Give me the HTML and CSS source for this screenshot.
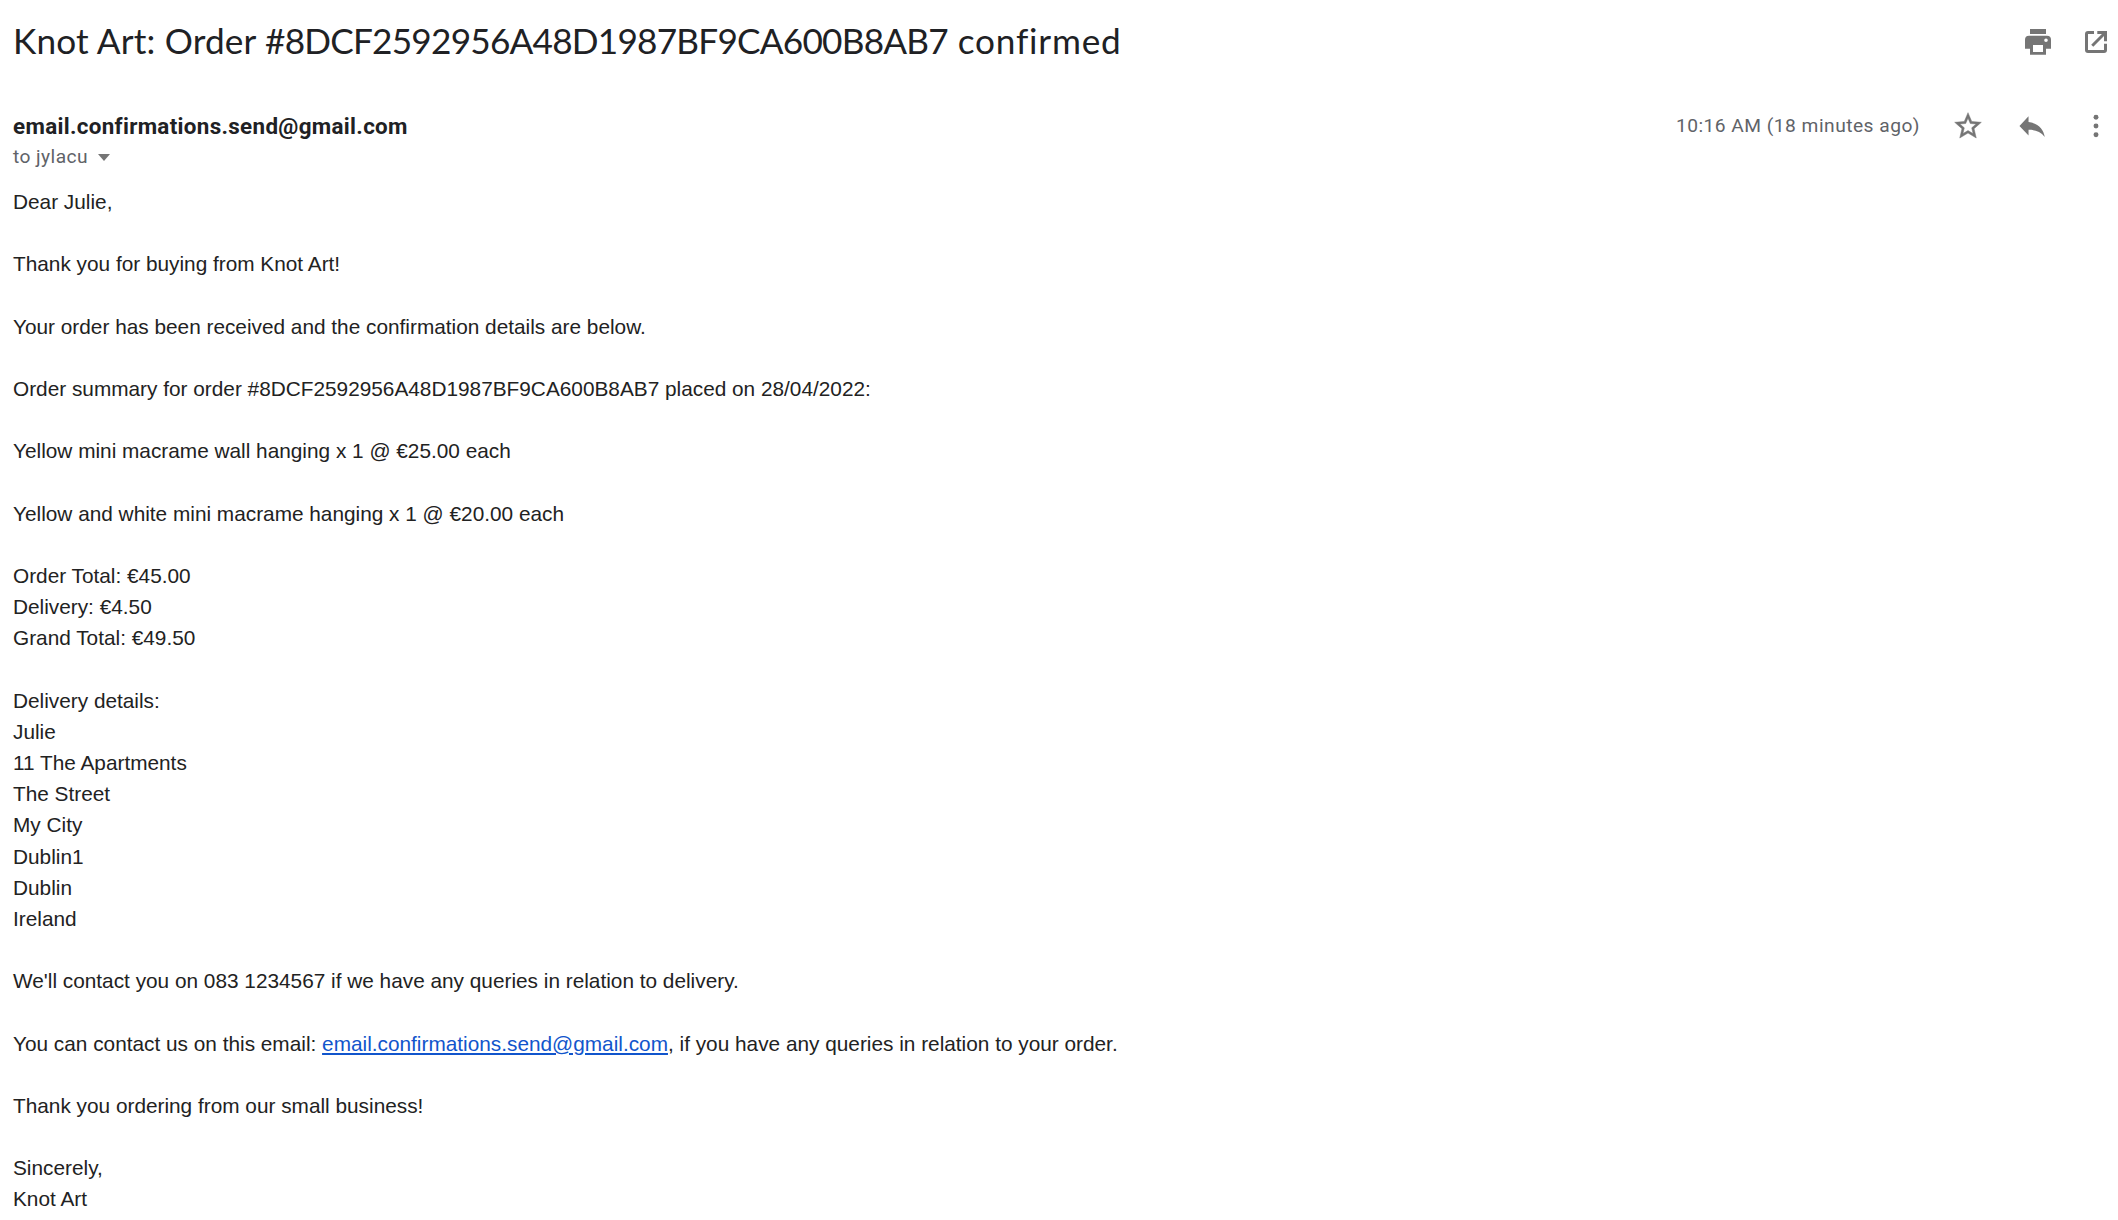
FILE: index.html
```html
<!DOCTYPE html>
<html lang="en">
<head>
<meta charset="utf-8">
<title>Knot Art order confirmation</title>
<link rel="stylesheet" href="styles.css">
</head>
<body>
<main class="message">
  <header class="subject-bar">
    <h1 class="subject">Knot Art: Order <span class="order-id">#8DCF2592956A48D1987BF9CA600B8AB7</span><span class="status"> confirmed</span></h1>
    <div class="subject-actions">
      <svg class="icon" viewBox="0 0 32 32" aria-label="Print"><path fill-rule="evenodd" d="M8 3h16v5H8zM7 9.700h18a4 4 0 0 1 4 4v9h-5v6H8v-6H3v-9a4 4 0 0 1 4-4zM11 19v7h10v-7zM24 12.500a1.800 1.800 0 1 0 0 3.600 1.800 1.800 0 0 0 0-3.600z"/></svg>
      <svg class="icon" viewBox="0 0 32 32" aria-label="Open in new window"><path d="M14 5v3H8v16h16v-6.300h3V24a3 3 0 0 1-3 3H8a3 3 0 0 1-3-3V8a3 3 0 0 1 3-3zM17.300 5H27v10.200h-3V10.100L13.300 20.800 11.200 18.700 21.900 8h-4.600z"/></svg>
    </div>
  </header>
  <section class="meta">
    <div class="people">
      <div class="sender">email.confirmations.send@gmail.com</div>
      <div class="recipient">to jylacu<span class="caret"></span></div>
    </div>
    <div class="meta-actions">
      <span class="time">10:16 AM (18 minutes ago)</span>
      <svg class="icon star" viewBox="0 0 24 24" aria-label="Star"><path d="M22 9.240l-7.190-.62L12 2 9.190 8.630 2 9.240l5.460 4.730L5.820 21 12 17.270 18.180 21l-1.630-7.030L22 9.240zM12 15.400l-3.760 2.270 1-4.280-3.320-2.880 4.380-.38L12 6.100l1.710 4.040 4.380.38-3.320 2.880 1 4.280L12 15.400z"/></svg>
      <svg class="icon" viewBox="0 0 24 24" aria-label="Reply"><path d="M9.400 9V4.700L2.600 12l6.800 7.100v-4.200c5 0 9 1.400 12.200 5.300-1-5.600-4.400-10.300-12.200-11.200z"/></svg>
      <svg class="icon" viewBox="0 0 24 24" aria-label="More"><circle cx="12" cy="5.400" r="1.850"/><circle cx="12" cy="12" r="1.850"/><circle cx="12" cy="18.600" r="1.850"/></svg>
    </div>
  </section>
  <article class="body">
    <p>Dear Julie,</p>
    <p>Thank you for buying from Knot Art!</p>
    <p>Your order has been received and the confirmation details are below.</p>
    <p>Order summary for order #8DCF2592956A48D1987BF9CA600B8AB7 placed on 28/04/2022:</p>
    <p>Yellow mini macrame wall hanging x 1 @ €25.00 each</p>
    <p>Yellow and white mini macrame hanging x 1 @ €20.00 each</p>
    <p>Order Total: €45.00<br>Delivery: €4.50<br>Grand Total: €49.50</p>
    <p>Delivery details:<br>Julie<br>11 The Apartments<br>The Street<br>My City<br>Dublin1<br>Dublin<br>Ireland</p>
    <p>We'll contact you on 083 1234567 if we have any queries in relation to delivery.</p>
    <p>You can contact us on this email: <a class="mail" href="mailto:email.confirmations.send@gmail.com">email.confirmations.send@gmail.com</a>, if you have any queries in relation to your order.</p>
    <p>Thank you ordering from our small business!</p>
    <p>Sincerely,<br>Knot Art</p>
  </article>
</main>
</body>
</html>
```
FILE: styles.css
```css
body { margin: 0; background: #fff; overflow: hidden; }
.message { padding: 0 6px 0 13px; }
.subject-bar { display: flex; justify-content: space-between; height: 84px; align-items: center; }
.subject { margin: 0; padding-bottom: 5px; font: 400 35.2px/48px Lato, "Liberation Sans", sans-serif; letter-spacing: .17px; color: #202124; white-space: nowrap; }
.order-id { letter-spacing: -.78px; }
.status { letter-spacing: .8px; }
.subject-actions { display: flex; gap: 26px; }
.icon { display: block; width: 32px; height: 32px; fill: #757575; }
.star { stroke: #757575; stroke-width: .35; }
.meta { display: flex; justify-content: space-between; align-items: flex-start; height: 102px; font-family: Roboto, "Liberation Sans", sans-serif; }
.people { padding-top: 26px; }
.sender { font-size: 22.4px; line-height: 32px; font-weight: 700; color: #202124; letter-spacing: .32px; }
.recipient { display: flex; align-items: center; font-size: 19.2px; line-height: 30px; color: #5f6368; letter-spacing: .42px; }
.caret { margin-left: 10px; border: 6px solid transparent; border-top: 7px solid #757575; border-bottom: 0; }
.meta-actions { display: flex; align-items: center; gap: 32px; padding-top: 26px; }
.time { font-size: 19.2px; line-height: 32px; letter-spacing: .48px; color: #5f6368; }
.body { font: 20.8px/31.17px "Liberation Sans", Arial, sans-serif; color: #222; }
.body p { margin: 0 0 31.17px; }
.mail { color: #1155cc; }
```
